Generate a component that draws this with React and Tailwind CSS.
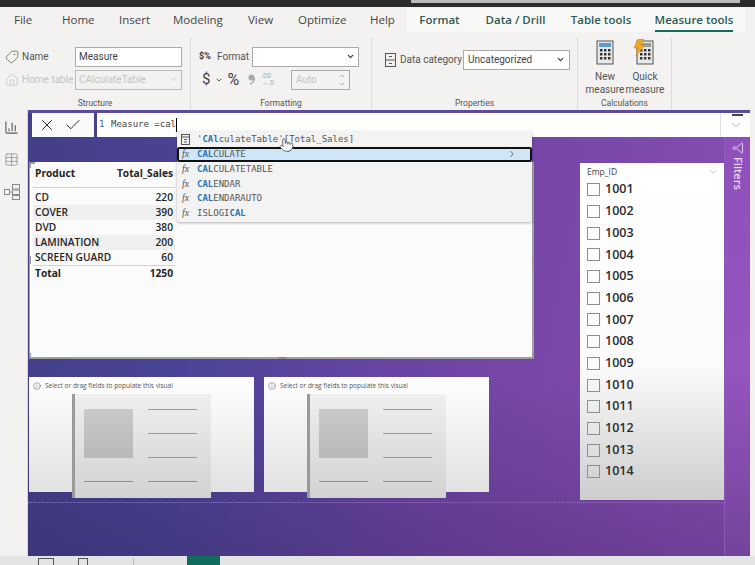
import React from 'react';
import { BarChart3, ChevronDown, ChevronRight, ChevronUp, Check, Filter, House, Info, Pointer, Tag, Table, X } from 'lucide-react';

const menuItems = [
  { label: 'File', w: 'w-[62px] pl-[14px]' },
  { label: 'Home', w: 'w-[57px]' },
  { label: 'Insert', w: 'w-[54px]' },
  { label: 'Modeling', w: 'w-[75px]' },
  { label: 'View', w: 'w-[50px]' },
  { label: 'Optimize', w: 'w-[72px]' },
  { label: 'Help', w: 'w-[37px]' },
];

const contextTabs = [
  { label: 'Format', w: 'w-[65px]' },
  { label: 'Data / Drill', w: 'w-[87px]' },
  { label: 'Table tools', w: 'w-[84px]' },
  { label: 'Measure tools', w: 'w-[102px]', active: true },
];

const rows = [
  ['CD', 220],
  ['COVER', 390, true],
  ['DVD', 380],
  ['LAMINATION', 200, true],
  ['SCREEN GUARD', 60],
];

const empIds = [1001, 1002, 1003, 1004, 1005, 1006, 1007, 1008, 1009, 1010, 1011, 1012, 1013, 1014];

const suggestions = [
  { parts: [['CAL', true], ['CULATE', false]], selected: true },
  { parts: [['CAL', true], ['CULATETABLE', false]] },
  { parts: [['CAL', true], ['ENDAR', false]] },
  { parts: [['CAL', true], ['ENDARAUTO', false]] },
  { parts: [['ISLOGI', false], ['CAL', true]] },
];

function Calculator({ bolt }) {
  return (
    <svg width="26" height="28" viewBox="0 0 26 28">
      <rect x="5" y="2" width="16" height="23" fill="#e8e8e8" stroke="#555" />
      <rect x="7" y="4" width="12" height="4" fill={bolt ? '#9a9a9a' : '#5b9bd5'} />
      {[10, 14, 18].map((y) =>
        [8, 12, 16].map((x) => <rect key={`${x}-${y}`} x={x} y={y} width="2.5" height="2.5" fill="#333" />)
      )}
      {bolt && <path d="M6 0h6l-3 6h4L4 17l2-8H2z" fill="#f2a81d" stroke="#c77f0a" strokeWidth="0.5" />}
    </svg>
  );
}

function ModelIcon() {
  return (
    <svg width="16" height="16" viewBox="0 0 16 16" fill="none" stroke="#8a8a8a">
      <rect x="0.5" y="5.5" width="5" height="5" />
      <rect x="8.5" y="0.5" width="7" height="4.5" />
      <rect x="8.5" y="6" width="7" height="4.5" />
      <rect x="8.5" y="11.5" width="7" height="4" />
      <path d="M5.5 8h3" />
    </svg>
  );
}

function PlaceholderVisual({ className }) {
  return (
    <div className={`absolute top-[239px] h-[115px] w-[225px] bg-gradient-to-b from-white to-[#e2e2e2] ${className}`}>
      <div className="flex items-center gap-[4px] pl-[4px] pt-[4px] text-[6.5px] leading-[9px] text-[#555]">
        <Info className="h-[8px] w-[8px]" strokeWidth={1.5} />
        <span>Select or drag fields to populate this visual</span>
      </div>
      <div className="absolute left-[43px] top-[17px] flex h-[104px] w-[139px] flex-col border-l-[3px] border-[#9a9a9a] bg-gradient-to-b from-[#efefef] to-[#d2d2d2] pl-[9px] pr-[14px] pt-[15px]">
        <div className="flex justify-between">
          <div className="h-[49px] w-[49px] bg-gradient-to-b from-[#c9c9c9] to-[#b9b9b9]" />
          <div className="flex w-[49px] flex-col gap-[23px]">
            <div className="h-px bg-[#9c9c9c]" />
            <div className="h-px bg-[#9c9c9c]" />
            <div className="h-px bg-[#9c9c9c]" />
          </div>
        </div>
        <div className="mt-[23px] flex justify-between">
          <div className="h-px w-[49px] bg-[#8f8f8f]" />
          <div className="h-px w-[49px] bg-[#8f8f8f]" />
        </div>
      </div>
    </div>
  );
}

export default function App() {
  return (
    <div className="relative flex h-[565px] w-[755px] flex-col overflow-hidden bg-[#f3f2f1] font-['Open_Sans','Noto_Sans',sans-serif] text-[#333]">
      {/* top strip */}
      <div className="flex h-[7px] shrink-0 bg-[#2e2c2b] pl-[411px]">
        <div className="h-[3px] w-[329px] bg-[#bdbbb8]" />
      </div>

      {/* menu */}
      <div className="flex h-[30px] shrink-0 items-start pt-px text-[11.5px] leading-[24px]">
        {menuItems.map((m) => (
          <div key={m.label} className={`${m.w} shrink-0 text-[#444]`}>{m.label}</div>
        ))}
        <div className="flex h-[24px]">
          {contextTabs.map((t) => (
            <div key={t.label} className={`${t.w} flex justify-center bg-[#f8f8f7] font-semibold text-[#2f5a55]`}>
              <span className={t.active ? 'h-full border-b-2 border-[#0f6b5c]' : ''}>{t.label}</span>
            </div>
          ))}
        </div>
      </div>

      {/* ribbon */}
      <div className="flex h-[73px] shrink-0 font-['Roboto','Open_Sans',sans-serif] text-[10px] text-[#555]">
        <div className="flex w-[191px] shrink-0 flex-col border-r border-[#dddcdb] pl-[5px]">
          <div className="mt-[9px] flex h-[21px] items-center">
            <Tag className="h-[14px] w-[14px] -scale-x-100" strokeWidth={1.3} />
            <span className="ml-[3px] w-[53px]">Name</span>
            <div className="flex h-[20px] w-[107px] items-center border border-[#aaa] bg-white px-[3px] text-[#444]">Measure</div>
          </div>
          <div className="mt-[2px] flex h-[21px] items-center text-[#c4c4c4]">
            <House className="h-[14px] w-[14px]" strokeWidth={1.3} />
            <span className="ml-[3px] w-[53px] whitespace-nowrap">Home table</span>
            <div className="flex h-[20px] w-[107px] items-center justify-between border border-[#bbb] px-[3px]">
              CAlculateTable
              <ChevronDown className="h-[9px] w-[9px]" />
            </div>
          </div>
          <div className="mt-auto pb-[1px] pr-[5px] text-center text-[8.5px] leading-[12px]">Structure</div>
        </div>

        <div className="flex w-[181px] shrink-0 flex-col border-r border-[#dddcdb] pl-[8px]">
          <div className="mt-[9px] flex h-[21px] items-center">
            <span className="relative w-[17px] text-[9px] font-bold leading-none text-[#333]">$%</span>
            <span className="ml-[1px] w-[35px]">Format</span>
            <div className="flex h-[20px] w-[107px] items-center justify-end border border-[#aaa] bg-white pr-[3px]">
              <ChevronDown className="h-[9px] w-[9px] text-[#333]" strokeWidth={3} />
            </div>
          </div>
          <div className="mt-[2px] flex h-[21px] items-center">
            <span className="ml-[3px] text-[15px] text-[#444]">$</span>
            <ChevronDown className="ml-[5px] h-[8px] w-[8px]" strokeWidth={3} />
            <span className="ml-[4px] text-[16px] text-[#444]">%</span>
            <svg className="ml-[9px]" width="7" height="11" viewBox="0 0 7 11">
              <circle cx="3.5" cy="3.5" r="3" fill="#aaa" />
              <path d="M6.5 4c0 3-2 5-4.5 6" fill="none" stroke="#aaa" strokeWidth="1.4" />
            </svg>
            <span className="ml-[6px] text-[7px] leading-[7px] text-[#9aaebd]">.00<br />→.0</span>
            <div className="ml-[17px] flex h-[20px] w-[59px] items-center justify-between border border-[#aaa] pl-[4px] pr-[3px] text-[#c4c4c4]">
              Auto
              <span className="flex flex-col">
                <ChevronUp className="h-[8px] w-[8px] text-[#888]" />
                <ChevronDown className="h-[8px] w-[8px] text-[#888]" />
              </span>
            </div>
          </div>
          <div className="mt-auto pb-[1px] pr-[8px] text-center text-[8.5px] leading-[12px]">Formatting</div>
        </div>

        <div className="flex w-[206px] shrink-0 flex-col border-r border-[#dddcdb] pl-[13px]">
          <div className="mt-[12px] flex h-[21px] items-center">
            <svg width="11" height="14" viewBox="0 0 11 14" fill="none" stroke="#555">
              <rect x="0.5" y="0.5" width="10" height="13" />
              <path d="M0.5 7h10M4 3.5h3M4 10.5h3" />
            </svg>
            <span className="ml-[4px] w-[63px] whitespace-nowrap">Data category</span>
            <div className="flex h-[20px] w-[107px] items-center justify-between border border-[#aaa] bg-white px-[4px] text-[#444]">
              Uncategorized
              <ChevronDown className="h-[9px] w-[9px] text-[#333]" strokeWidth={3} />
            </div>
          </div>
          <div className="mt-auto pb-[1px] pr-[13px] text-center text-[8.5px] leading-[12px]">Properties</div>
        </div>

        <div className="flex w-[94px] shrink-0 flex-col border-r border-[#dddcdb]">
          <div className="mt-[2px] flex pl-[7px]">
            <div className="flex w-[40px] flex-col items-center leading-[13px]">
              <Calculator />
              <span className="mt-[3px]">New</span>
              <span>measure</span>
            </div>
            <div className="flex w-[40px] flex-col items-center leading-[13px]">
              <Calculator bolt />
              <span className="mt-[3px]">Quick</span>
              <span>measure</span>
            </div>
          </div>
          <div className="mt-auto pb-[1px] text-center text-[8.5px] leading-[12px]">Calculations</div>
        </div>
      </div>

      {/* body */}
      <div className="flex min-h-0 flex-1">
        <div className="flex w-[28px] shrink-0 flex-col items-center gap-[17px] border-r border-[#d5d5d5] bg-[#f3f2f1] pr-[4px] pt-[10px] text-[#5a5a5a]">
          <BarChart3 className="h-[15px] w-[15px]" strokeWidth={1.8} />
          <Table className="h-[15px] w-[15px] text-[#8a8a8a]" strokeWidth={1.2} />
          <ModelIcon />
        </div>

        <div className="mr-[5px] flex flex-1 flex-col border-t-[3px] border-[#5b4a9e] bg-[linear-gradient(to_bottom,rgba(25,15,55,0)_60%,rgba(25,15,55,0.22)_100%),linear-gradient(100deg,#433e88_0%,#4b4496_25%,#7446a6_62%,#8a4fb5_100%)]">
          {/* formula bar */}
          <div className="flex h-[25px] shrink-0 pl-[4px]">
            <div className="flex h-[24px] w-[62px] items-center gap-[8px] bg-[#fafafa] pl-[6px] text-[#222]">
              <X className="h-[18px] w-[18px]" strokeWidth={1.3} />
              <Check className="h-[18px] w-[18px]" strokeWidth={1.3} />
            </div>
            <div className="ml-[3px] flex h-[24px] flex-1 items-center bg-white pl-[2px] font-['DejaVu_Sans_Mono',monospace] text-[9px] text-[#444]">
              <span className="w-[12px] text-[#3a5fa0]">1</span>
              <span>Measure =cal</span>
              <span className="h-[14px] w-px bg-black" />
            </div>
            <div className="relative flex h-[24px] w-[30px] items-center justify-center border-l border-[#e0e0e0] bg-white text-[#777]">
              <div className="absolute right-[7px] top-[1px] h-[2px] w-[11px] bg-[#444]" />
              <ChevronDown className="h-[14px] w-[14px]" strokeWidth={1} />
            </div>
          </div>

          {/* report page */}
          <div className="flex min-h-0 flex-1">
            <div className="relative flex-1">
              <div className="absolute left-[1px] top-[24px] h-[197px] w-[505px] border-b-[2px] border-l border-r-[2px] border-[#a0a0a0] bg-[#fbfbfb] pl-[3px]">
                <div className="w-[142px] text-[10.2px] font-semibold leading-[15px] text-[#252423]">
                  <div className="flex h-[26px] items-start justify-between border-b border-[#d9c9e3] px-[2px] pt-[4px] font-bold">
                    <span>Product</span>
                    <span>Total_Sales</span>
                  </div>
                  <div className="border-b border-[#d9c9e3] pt-[2px]">
                    {rows.map(([name, value, striped]) => (
                      <div key={name} className={`flex justify-between px-[2px] ${striped ? 'bg-[#f0f0f0]' : ''}`}>
                        <span>{name}</span>
                        <span>{value}</span>
                      </div>
                    ))}
                  </div>
                  <div className="flex justify-between px-[2px] font-bold">
                    <span>Total</span>
                    <span>1250</span>
                  </div>
                </div>
                {/* selection handles */}
                <div className="absolute -left-px top-0 h-[6px] w-[6px] border-l-2 border-t-2 border-[#9a9a9a]" />
                <div className="absolute -bottom-[2px] -left-px h-[6px] w-[6px] border-b-2 border-l-2 border-[#9a9a9a]" />
                <div className="absolute -bottom-[2px] -right-[2px] h-[6px] w-[6px] border-b-2 border-r-2 border-[#9a9a9a]" />
                <div className="absolute -left-px top-[94px] h-[8px] w-[2px] bg-[#9a9a9a]" />
                <div className="absolute -right-[2px] top-[94px] h-[8px] w-[2px] bg-[#9a9a9a]" />
                <div className="absolute -bottom-[2px] left-[248px] h-[2px] w-[8px] bg-[#8a8a8a]" />
              </div>

              <PlaceholderVisual className="left-[1px]" />
              <PlaceholderVisual className="left-[236px]" />

              <div className="absolute left-[552px] top-[25px] h-[337px] w-[144px] bg-[linear-gradient(to_bottom,#ffffff_0%,#fbfbfb_60%,#cdcdcd_100%)] pl-[7px] pr-[6px] pt-[2px]">
                <div className="flex h-[14px] items-center justify-between text-[8.5px] text-[#444]">
                  <span>Emp_ID</span>
                  <ChevronDown className="h-[10px] w-[10px] text-[#888]" strokeWidth={1.2} />
                </div>
                {empIds.map((id) => (
                  <div key={id} className="flex h-[21.7px] items-center gap-[5px] text-[12.5px] font-semibold text-[#2b2b2b]">
                    <div className="h-[13px] w-[13px] border border-[#8f8f8f]" />
                    <span>{id}</span>
                  </div>
                ))}
              </div>

              <div className="absolute bottom-[53px] left-0 right-0 border-t border-dotted border-[#8d7aa8]" />
            </div>

            <div className="flex w-[26px] shrink-0 flex-col items-center border-l border-[#8a5ab5] bg-[linear-gradient(to_bottom,#9050bc_0%,#9555bf_55%,#74449b_100%)] pt-[4px] text-[#e9dcf3]">
              <Filter className="h-[12px] w-[12px] rotate-90" strokeWidth={1.8} />
              <span className="mt-[3px] text-[11px] font-semibold [writing-mode:vertical-rl]">Filters</span>
            </div>
          </div>
        </div>
      </div>

      {/* bottom status */}
      <div className="flex h-[9px] shrink-0 items-start bg-[#e4e4e4] pt-[2px]">
        <div className="ml-[38px] h-[7px] w-[16px] border border-b-0 border-[#555]" />
        <div className="ml-[24px] h-[7px] w-[10px] border border-b-0 border-[#555]" />
        <div className="ml-[45px] h-[9px] w-px bg-[#bbb]" />
        <div className="ml-[53px] -mt-[2px] h-[9px] w-[33px] bg-[#0f6b5c]" />
      </div>

      {/* autocomplete */}
      <div className="absolute left-[177px] top-[131px] h-[91px] w-[355px] rounded-[2px] bg-[#f3f3f3] pt-px font-['DejaVu_Sans_Mono',monospace] text-[9px] leading-[14.8px] text-[#555] shadow-[0_1px_3px_rgba(0,0,0,0.3)]">
        <div className="mb-px flex h-[14px] items-center pl-[4px]">
          <svg width="9" height="11" viewBox="0 0 9 11" fill="none" stroke="#555">
            <rect x="0.5" y="0.5" width="8" height="10" />
            <path d="M0.5 3h8M3 5.5h3M3 8h3" />
          </svg>
          <span className="ml-[7px]">'<b className="text-[#2a74b5]">CAl</b>culateTable'[Total_Sales]</span>
        </div>
        {suggestions.map((s) => (
          <div
            key={s.parts.map((p) => p[0]).join('')}
            className={`flex h-[14.8px] items-center pl-[3px] ${s.selected ? 'rounded-[2px] border-2 border-[#111] bg-[#cfe6f8] pr-[13px]' : 'border-2 border-transparent'}`}
          >
            <span className="w-[15px] font-['Liberation_Serif',serif] text-[10px] italic text-[#555]">fx</span>
            <span>
              {s.parts.map(([text, hit]) => (
                hit ? <b key={text} className="text-[#2a74b5]">{text}</b> : <span key={text}>{text}</span>
              ))}
            </span>
            {s.selected && <ChevronRight className="ml-auto h-[10px] w-[10px] text-[#555]" />}
          </div>
        ))}
      </div>

      {/* mouse pointer */}
      <Pointer className="absolute left-[279px] top-[137px] h-[16px] w-[15px] fill-white text-[#555]" strokeWidth={1.4} />
    </div>
  );
}
